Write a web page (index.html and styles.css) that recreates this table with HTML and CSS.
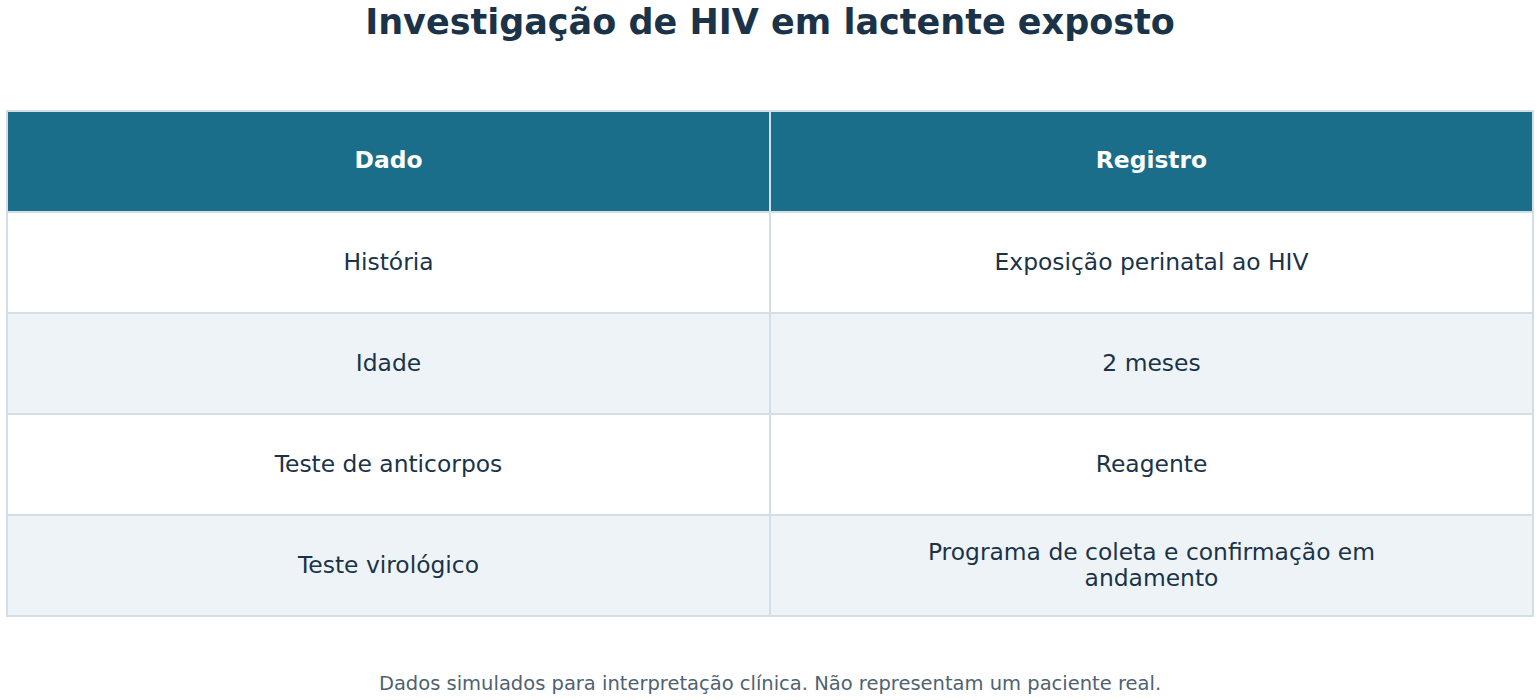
FILE: index.html
```html
<!DOCTYPE html>
<html lang="pt">
<head>
<meta charset="utf-8">
<link rel="stylesheet" href="styles.css">
</head>
<body>
<div class="page">
  <h1 class="title">Investigação de HIV em lactente exposto</h1>
  <table class="data">
    <thead>
      <tr><th>Dado</th><th>Registro</th></tr>
    </thead>
    <tbody>
      <tr><td>História</td><td>Exposição perinatal ao HIV</td></tr>
      <tr class="alt"><td>Idade</td><td>2 meses</td></tr>
      <tr><td>Teste de anticorpos</td><td>Reagente</td></tr>
      <tr class="alt"><td>Teste virológico</td><td><span class="wrap">Programa de coleta e confirmação em andamento</span></td></tr>
    </tbody>
  </table>
  <p class="note">Dados simulados para interpretação clínica. Não representam um paciente real.</p>
</div>
</body>
</html>
```
FILE: styles.css
```css
html, body {
  margin: 0;
  padding: 0;
  background: #ffffff;
}
.page {
  padding: 0 6px;
  font-family: "DejaVu Sans", sans-serif;
  color: #1a3349;
}
.title {
  margin: 0;
  height: 110px;
  box-sizing: border-box;
  padding-top: 2px;
  font-size: 35px;
  line-height: 40px;
  font-weight: bold;
  text-align: center;
  color: #1a3349;
}
.data {
  width: 100%;
  border-collapse: collapse;
  table-layout: fixed;
  border: 2px solid #d3dee7;
}
.data th, .data td {
  border: 2px solid #d3dee7;
  text-align: center;
  vertical-align: middle;
  font-size: 23.4px;
  line-height: 26px;
}
.data td {
  height: 98px;
  padding: 0 20px 1px;
  background: #ffffff;
  color: #1a3349;
}
.data th {
  height: 96px;
  padding: 0 20px 3px;
  background: #1a6e89;
  color: #ffffff;
  font-weight: bold;
}
.data tr.alt td {
  background: #eef3f7;
}
.wrap {
  display: inline-block;
  max-width: 480px;
}
.note {
  margin: 54px 0 0;
  text-align: center;
  font-size: 19.5px;
  line-height: 26px;
  color: #4f6272;
}
```
